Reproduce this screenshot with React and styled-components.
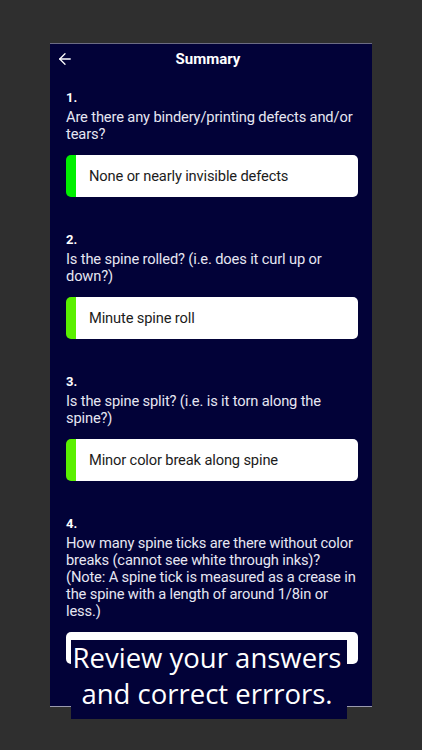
import React from "react";
import styled, { createGlobalStyle } from "styled-components";
import { ArrowLeft } from "lucide-react";

const GlobalStyle = createGlobalStyle`
  html, body {
    margin: 0;
    padding: 0;
    background: #2f2f2f;
  }
`;

const Page = styled.div`
  position: relative;
  width: 422px;
  height: 750px;
  padding-top: 43px;
  box-sizing: border-box;
  background: #2f2f2f;
  overflow: hidden;
`;

const Screen = styled.div`
  margin-left: 50px;
  width: 322px;
  height: 664px;
  box-sizing: border-box;
  background: #020238;
  border-top: 1px solid #6c6c84;
  border-bottom: 1px solid #9a9aae;
  overflow: hidden;
  font-family: Roboto, "Noto Sans", sans-serif;
`;

const Header = styled.div`
  display: flex;
  align-items: center;
  justify-content: center;
  position: relative;
  height: 30px;
  padding-right: 6px;
`;

const Back = styled.div`
  position: absolute;
  left: 6px;
  top: 6px;
  display: flex;
  color: #ffffff;
`;

const Title = styled.div`
  color: #ffffff;
  font-size: 15px;
  font-weight: 700;
`;

const Content = styled.div`
  padding: 16px 12px 0 16px;
`;

const Section = styled.div`
  margin-bottom: 35px;
`;

const Number = styled.div`
  color: #ffffff;
  font-size: 13px;
  font-weight: 700;
  line-height: 16px;
`;

const Question = styled.div`
  margin-top: 3px;
  color: #e6e6f2;
  font-size: 14.7px;
  letter-spacing: -0.15px;
  line-height: 17px;
`;

const Answer = styled.div`
  display: flex;
  align-items: center;
  margin-top: 12px;
  margin-right: 2px;
  height: ${(p) => (p.empty ? "32px" : "42px")};
  background: #ffffff;
  border-radius: 5px;
  overflow: hidden;
  border-left: ${(p) => (p.bar ? `10px solid ${p.bar}` : "0")};
`;

const AnswerText = styled.span`
  padding-left: 13px;
  color: #1c1c1c;
  font-size: 14.7px;
  letter-spacing: -0.15px;
`;

const Caption = styled.div`
  position: absolute;
  left: 71px;
  top: 640px;
  width: 276px;
  height: 79px;
  padding-right: 4px;
  background: #020238;
  color: #ffffff;
  font-family: "Open Sans", sans-serif;
  font-size: 27.5px;
  line-height: 36px;
  text-align: center;
  box-sizing: border-box;
`;

const items = [
  {
    q: "Are there any bindery/printing defects and/or tears?",
    a: "None or nearly invisible defects",
    bar: "#00f000",
  },
  {
    q: "Is the spine rolled? (i.e. does it curl up or down?)",
    a: "Minute spine roll",
    bar: "#5af000",
  },
  {
    q: "Is the spine split? (i.e. is it torn along the spine?)",
    a: "Minor color break along spine",
    bar: "#5af000",
  },
  {
    q: "How many spine ticks are there without color breaks (cannot see white through inks)? (Note: A spine tick is measured as a crease in the spine with a length of around 1/8in or less.)",
    a: "",
    bar: null,
  },
];

export default function App() {
  return (
    <Page>
      <GlobalStyle />
      <Screen>
        <Header>
          <Back>
            <ArrowLeft size={18} strokeWidth={1.7} />
          </Back>
          <Title>Summary</Title>
        </Header>
        <Content>
          {items.map((it, i) => (
            <Section key={i}>
              <Number>{i + 1}.</Number>
              <Question>{it.q}</Question>
              <Answer bar={it.bar} empty={!it.a}>
                {it.a && <AnswerText>{it.a}</AnswerText>}
              </Answer>
            </Section>
          ))}
        </Content>
      </Screen>
      <Caption>
        Review your answers
        <br />
        and correct errrors.
      </Caption>
    </Page>
  );
}
